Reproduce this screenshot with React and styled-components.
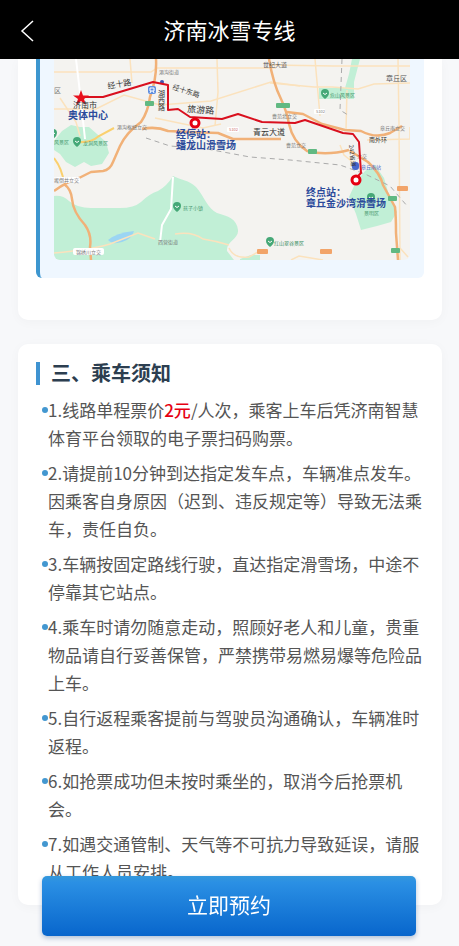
import React from "react";
import styled, { createGlobalStyle } from "styled-components";

const GlobalStyle = createGlobalStyle`
  * {
    box-sizing: border-box;
  }

  body {
    margin: 0;
    background: #f7f8fa;
    font-family: "Noto Sans CJK SC", "Noto Sans", sans-serif;
  }
`;

const Page = styled.div`
  min-height: 100vh;
  padding: 59px 17px 40px 18px;
`;

const TopBar = styled.header`
  position: fixed;
  top: 0;
  left: 0;
  right: 0;
  z-index: 2;
  height: 59px;
  display: grid;
  grid-template-columns: 56px 1fr 56px;
  align-items: center;
  background: #000;
  color: #fff;
`;

const BackButton = styled.button`
  display: flex;
  align-items: center;
  height: 44px;
  margin-top: 2px;
  padding: 0 0 0 20px;
  border: none;
  background: transparent;
  color: inherit;
  cursor: pointer;
`;

const PageTitle = styled.h1`
  margin: 0;
  padding-bottom: 2px;
  font-size: 22px;
  font-weight: 400;
  line-height: 32px;
  text-align: center;
`;

const Card = styled.section`
  margin-bottom: 24px;
  padding: 17px 16px 19px 18px;
  background: #fff;
  border-radius: 10px;
  box-shadow: 0 2px 12px rgba(0, 0, 0, 0.03);
`;

const MapCard = styled(Card)`
  padding: 0 18px 42px;
  border-top-left-radius: 0;
  border-top-right-radius: 0;
`;

const MapPanel = styled.div`
  padding: 0 14px 18px;
  background: #eff7ff;
  border-left: 4px solid #3d96cf;
  border-radius: 0 0 6px 6px;
`;

const MapSvg = styled.svg`
  display: block;
  width: 100%;
  height: auto;
  border-radius: 0 0 6px 6px;
  font-family: "Noto Sans CJK SC", "Noto Sans", sans-serif;
`;

const SectionTitle = styled.h2`
  display: flex;
  align-items: center;
  gap: 11px;
  margin: 0 0 11px;
  color: #2c3e50;
  font-size: 20px;
  font-weight: 700;
  line-height: 24px;

  &::before {
    content: "";
    width: 4px;
    height: 23px;
    background: #3f93d1;
  }
`;

const NoticeList = styled.ul`
  display: flex;
  flex-direction: column;
  gap: 7px;
  margin: 0;
  padding: 0 0 0 6px;
  list-style: none;
`;

const NoticeItem = styled.li`
  display: grid;
  grid-template-columns: 6px 1fr;
  color: #555;
  font-size: 17px;
  line-height: 28px;

  &::before {
    content: "";
    width: 6px;
    height: 6px;
    margin-top: 11px;
    border-radius: 50%;
    background: #4397d0;
  }
`;

const Price = styled.span`
  color: #e60012;
  font-weight: 500;
`;

const BookButton = styled.button`
  position: fixed;
  left: 42px;
  right: 43px;
  bottom: 10px;
  height: 60px;
  padding: 0 0 5px;
  border: none;
  border-radius: 5px;
  background: linear-gradient(#3498db, #2b90e4 10%, #0866cc);
  box-shadow: 0 2px 5px rgba(0, 60, 130, 0.3);
  color: #fff;
  font-family: inherit;
  font-size: 21px;
  line-height: 30px;
  cursor: pointer;
`;

const notices = [
  <>
    1.线路单程票价<Price>2元</Price>/人次，乘客上车后凭济南智慧体育平台领取的电子票扫码购票。
  </>,
  "2.请提前10分钟到达指定发车点，车辆准点发车。因乘客自身原因（迟到、违反规定等）导致无法乘车，责任自负。",
  "3.车辆按固定路线行驶，直达指定滑雪场，中途不停靠其它站点。",
  "4.乘车时请勿随意走动，照顾好老人和儿童，贵重物品请自行妥善保管，严禁携带易燃易爆等危险品上车。",
  "5.自行返程乘客提前与驾驶员沟通确认，车辆准时返程。",
  "6.如抢票成功但未按时乘坐的，取消今后抢票机会。",
  "7.如遇交通管制、天气等不可抗力导致延误，请服从工作人员安排。",
];

const places = [
  { x: 54, y: 93, text: "区", size: 7 },
  { x: 159, y: 74, text: "港沟街道" },
  { x: 263, y: 67, text: "世纪大道", size: 6, color: "#555" },
  { x: 386, y: 81, text: "章丘区", size: 7, color: "#555" },
  { x: 117, y: 129, text: "港沟枢纽立交" },
  { x: 54, y: 144, text: "风景区", color: "#4a9a72" },
  { x: 83, y: 145, text: "龙洞风景区", color: "#4a9a72" },
  { x: 330, y: 97, text: "危山风景区", color: "#4a9a72" },
  { x: 272, y: 118, text: "曹范北立交" },
  { x: 286, y: 147, text: "曹范立交" },
  { x: 380, y: 130, text: "章丘南立交" },
  { x: 357, y: 158, text: "立交" },
  { x: 361, y: 169, text: "章丘南站", color: "#4b67c8" },
  { x: 54, y: 182, text: "搬倒井立交" },
  { x: 76, y: 254, text: "锦绣川立交" },
  { x: 183, y: 210, text: "孩子小镇", color: "#4a9a72" },
  { x: 158, y: 244, text: "西营街道" },
  { x: 274, y: 245, text: "红山翠谷景区", color: "#348c60" },
  { x: 364, y: 215, text: "景明区", color: "#4a9a72" },
];

const greenPins = [
  [77, 142],
  [325, 94],
  [177, 207],
  [270, 242],
  [371, 198],
  [53, 134],
];

const roadSigns = [
  { x: 276, y: 103, width: 14, color: "#61b982" },
  { x: 308, y: 149, width: 9, color: "#61b982" },
  { x: 145, y: 101, width: 9, color: "#61b982" },
  { x: 388, y: 196, width: 9, color: "#61b982" },
  { x: 391, y: 248, width: 9, color: "#61b982" },
  { x: 257, y: 249, width: 11, color: "#f2a469" },
  { x: 320, y: 249, width: 12, color: "#f2a469" },
  { x: 397, y: 186, width: 11, color: "#f2a469" },
];

const RouteMap = () => (
  <MapSvg viewBox="54 59 356 201" role="img" aria-label="线路图">
    <rect x="54" y="59" width="356" height="201" fill="#f4f3f0" />

    <g fill="#c1efd6">
      <path d="M54 196Q63 195 69 201Q77 208 91 208H120Q134 208 141 202Q149 194 158 191Q167 186 173 176C181 180 189 180 196 187C204 196 208 209 217 213C228 216 237 219 238 230C239 239 226 241 227 251L234 260H54Z" />
      <path d="M62 131L71 125L80 127L89 127L97 134L106 142L109 153L102 164L91 166L84 162L75 167L66 162L60 154L54 150V141Z" />
      <path d="M352 59H360L354 82V99H319V88H345L349 74Z" />
      <path d="M375 165L384 178L389 195L397 212L391 222L377 226L361 230L356 214L349 197L355 184L365 171Z" />
      <path d="M240 259L251 255H260V260H240Z" />
    </g>
    <path d="M108 240Q116 233 134 231Q132 239 122 242Q112 245 108 240Z" fill="#9bd5f3" />

    <g fill="none" stroke="#fbe2bd" strokeWidth="1.5">
      <path d="M54 72H151L157 68H276M54 109H96L124 95L160 105L211 101L271 82L300 86" />
      <path d="M270 65L334 66H410M270 83L314 87H332L358 89L374 84L410 83" />
      <path d="M217 59L218 92L215 126M315 59L320 116M347 90L346 130M398 59L399 125L400 260" />
      <path d="M54 253Q90 250 110 244L138 233L155 239M175 234Q192 231 203 239Q216 241 229 245" />
      <path d="M221 124L203 128L155 118M60 98L76 122L80 136M130 59L132 83" />
      <path d="M229 248Q234 259 249 257L258 252M291 260L299 256L323 260M400 248L408 257" />
      <path d="M340 145L344 155L359 167M367 140L410 139V127" />
    </g>
    <path d="M76 59L80 93L85 139M173 177L171 209L162 225L160 242" fill="none" stroke="#fff" strokeWidth="2" />

    <g fill="none" stroke="#f1b178" strokeWidth="2.5" strokeLinejoin="round">
      <path d="M156 59Q157 78 150 97Q148 112 141 122Q126 133 120 146L113 162Q110 170 103 171L91 172L79 178Q68 181 54 191" />
      <path d="M64 184Q71 189 72 199Q73 212 85 225Q92 235 90 247L91 260" />
      <path d="M269 59Q273 83 281 99Q287 112 289 124Q293 142 307 151Q326 156 349 150" />
      <path d="M287 112L303 114L322 124L345 130L361 131Q376 139 390 133L402 126" />
      <path d="M142 129Q156 126 168 131L189 132L218 133L233 139H281" />
      <path d="M350 151L368 162Q380 173 383 185L395 207Q396 216 396 233L398 260" />
    </g>
    <path d="M54 158Q62 168 64 183M78 142Q91 143 99 136L114 128" fill="none" stroke="#fad06e" strokeWidth="2" />
    <g fill="none" stroke="#aaa" strokeDasharray="5 4">
      <path d="M146 138L170 146L207 149L250 157L290 160L340 165L365 174L390 186L408 207" />
      <path d="M342 59L340 110L348 115" />
    </g>

    {roadSigns.map((sign) => (
      <rect key={`${sign.x}-${sign.y}`} x={sign.x} y={sign.y} width={sign.width} height="5" rx="1" fill={sign.color} />
    ))}

    <g fill="#fff">
      <rect x="73" y="248" width="31" height="7" rx="2" />
      <rect x="53" y="177" width="27" height="6" rx="2" />
      <rect x="314" y="109" width="11" height="5" rx="1" />
      <rect x="227" y="127" width="12" height="5" rx="1" />
    </g>
    <text x="229" y="131" fontSize="4" fill="#c66">S102</text>
    <text x="316" y="113" fontSize="4" fill="#777">S102</text>

    {greenPins.map(([x, y]) => (
      <g key={`${x}-${y}`} transform={`translate(${x} ${y})`}>
        <path d="M0 5Q-4 2 -4 -1A4 4 0 1 1 4 -1Q4 2 0 5Z" fill="#45a877" />
        <path d="M-2 -1Q0 2 2 -1" fill="none" stroke="#fff" />
      </g>
    ))}

    {places.map((place) => (
      <text key={place.text} x={place.x} y={place.y} fontSize={place.size || 5} fill={place.color || "#777"}>
        {place.text}
      </text>
    ))}

    <rect x="148" y="86" width="8" height="8" rx="2" fill="#5f8fe0" />
    <path d="M150 91V88H154V91ZM150 93L151 91M154 93L153 91" fill="none" stroke="#fff" />
    <circle cx="162" cy="82" r="2" fill="#3c57b5" />
    <rect x="352" y="162" width="7" height="8" rx="3" fill="#4666cc" />

    <path
      d="M81 97H103L153 82L168 85V110L178 109L190 117L222 119L238 114L262 122L295 123L305 120L343 133L353 134L359 142L361 173L357 177"
      fill="none"
      stroke="#d9101e"
      strokeWidth="2"
      strokeLinejoin="round"
    />
    <path d="M81 90L83 95.5H89L84 99L86 105L81 101L76 105L78 99L73 95.5H79Z" fill="#e8101c" />
    <circle cx="195" cy="123" r="4" fill="#fff" stroke="#e60012" strokeWidth="3" />
    <circle cx="356" cy="180" r="4" fill="#fff" stroke="#e60012" strokeWidth="3" />

    <g fill="#333">
      <text x="108" y="89" fontSize="8" transform="rotate(-10 108 89)">经十路</text>
      <text x="172" y="89" fontSize="7" transform="rotate(18 172 89)">经十东路</text>
      <text x="187" y="112" fontSize="9" transform="rotate(4 187 112)">旅游路</text>
      <text x="253" y="135" fontSize="8">青云大道</text>
      <text x="369" y="142" fontSize="6">南外环</text>
      <text x="73" y="108" fontSize="8">济南市</text>
      <text fontSize="7">
        <tspan x="158" y="96">湖</tspan>
        <tspan x="158" y="103">西</tspan>
        <tspan x="158" y="110">路</tspan>
      </text>
      <text x="349" y="145" fontSize="6" transform="rotate(84 349 145)">242省道</text>
    </g>

    <g fill="#2b4a9b" fontWeight="700" fontSize="10">
      <text x="68" y="119">奥体中心</text>
      <text x="176" y="138">经停站：</text>
      <text x="176" y="149">蟠龙山滑雪场</text>
      <text x="306" y="196">终点站：</text>
      <text x="306" y="207">章丘金沙湾滑雪场</text>
    </g>
  </MapSvg>
);

const App = () => {
  return (
    <>
      <GlobalStyle />
      <TopBar>
        <BackButton type="button" aria-label="返回">
          <svg width="14" height="22" viewBox="0 0 14 22" fill="none" stroke="currentColor" strokeWidth="1.5">
            <path d="M13 1L2 11L13 21" />
          </svg>
        </BackButton>
        <PageTitle>济南冰雪专线</PageTitle>
      </TopBar>
      <Page>
        <MapCard>
          <MapPanel>
            <RouteMap />
          </MapPanel>
        </MapCard>
        <Card>
          <SectionTitle>三、乘车须知</SectionTitle>
          <NoticeList>
            {notices.map((notice, index) => (
              <NoticeItem key={index}>
                <span>{notice}</span>
              </NoticeItem>
            ))}
          </NoticeList>
        </Card>
      </Page>
      <BookButton type="button">立即预约</BookButton>
    </>
  );
};

export default App;
